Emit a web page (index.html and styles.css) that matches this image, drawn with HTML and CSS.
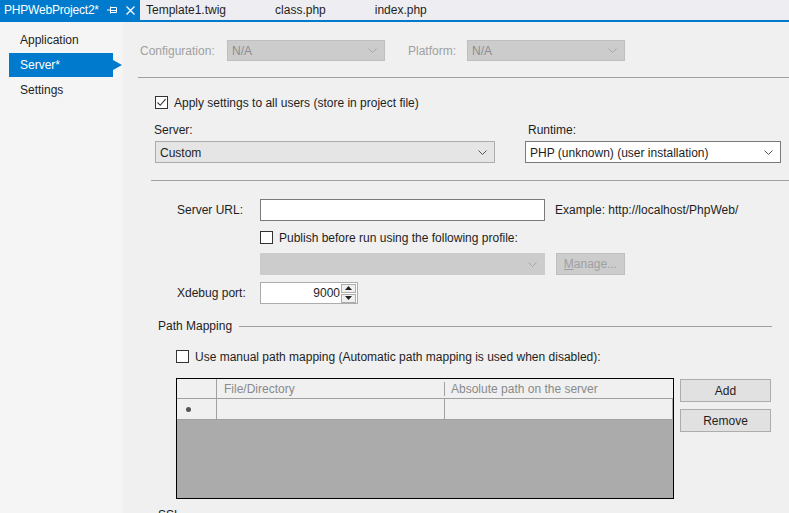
FILE: index.html
```html
<!DOCTYPE html>
<html lang="en">
<head>
    <meta charset="UTF-8">
    <title>PHPWebProject2 - Server</title>
    <link rel="stylesheet" href="styles.css">
</head>
<body>
    <div class="tabbar">
        <div class="tab active">
            <span class="tab-title">PHPWebProject2*</span>
            <svg class="pin" width="10" height="8" viewBox="0 0 10 8"><path d="M0 4H3.5M3.5 0.5V7.5M3.5 1.5H9.5V6.5H3.5M3.5 4.5H9.5" fill="none" stroke="#fff" stroke-width="1"/></svg>
            <svg class="close" width="9" height="9" viewBox="0 0 9 9"><path d="M0.5 0.5L8.5 8.5M8.5 0.5L0.5 8.5" stroke="#fff" stroke-width="1.3"/></svg>
        </div>
        <div class="tab">Template1.twig</div>
        <div class="tab">class.php</div>
        <div class="tab">index.php</div>
    </div>

    <div class="workspace">
        <nav class="sidenav">
            <div class="nav-item">Application</div>
            <div class="nav-item selected">Server*</div>
            <div class="nav-item">Settings</div>
        </nav>

        <main class="panel">
            <div class="config-row">
                <label class="lbl-config">Configuration:</label>
                <div class="combo disabled small"><span>N/A</span><svg width="9" height="5" viewBox="0 0 9 5"><path d="M0.5 0.5L4.5 4.5L8.5 0.5" fill="none" stroke="#a8a8a8"/></svg></div>
                <label class="lbl-platform">Platform:</label>
                <div class="combo disabled small"><span>N/A</span><svg width="9" height="5" viewBox="0 0 9 5"><path d="M0.5 0.5L4.5 4.5L8.5 0.5" fill="none" stroke="#a8a8a8"/></svg></div>
            </div>

            <div class="separator"></div>

            <div class="check-row apply-row">
                <span class="checkbox"><svg width="11" height="11" viewBox="0 0 11 11"><path d="M1.5 5.5L4.2 8.3L9.6 2.2" fill="none" stroke="#333" stroke-width="1.1"/></svg></span>
                <span>Apply settings to all users (store in project file)</span>
            </div>

            <div class="server-row">
                <div class="field-col server-col">
                    <label>Server:</label>
                    <div class="combo grey"><span>Custom</span><svg width="9" height="5" viewBox="0 0 9 5"><path d="M0.5 0.5L4.5 4.5L8.5 0.5" fill="none" stroke="#555"/></svg></div>
                </div>
                <div class="field-col runtime-col">
                    <label>Runtime:</label>
                    <div class="combo white"><span>PHP (unknown) (user installation)</span><svg width="9" height="5" viewBox="0 0 9 5"><path d="M0.5 0.5L4.5 4.5L8.5 0.5" fill="none" stroke="#555"/></svg></div>
                </div>
            </div>

            <div class="separator sep-two"></div>

            <div class="form">
                <div class="form-row url-row">
                    <label>Server URL:</label>
                    <div class="textbox"></div>
                    <span class="hint">Example: http://localhost/PhpWeb/</span>
                </div>
                <div class="form-row publish-row">
                    <label></label>
                    <span class="checkbox"></span>
                    <span class="check-text">Publish before run using the following profile:</span>
                </div>
                <div class="form-row profile-row">
                    <label></label>
                    <div class="combo disabled wide"><span></span><svg width="9" height="5" viewBox="0 0 9 5"><path d="M0.5 0.5L4.5 4.5L8.5 0.5" fill="none" stroke="#a8a8a8"/></svg></div>
                    <div class="button disabled"><u>M</u>anage...</div>
                </div>
                <div class="form-row port-row">
                    <label>Xdebug port:</label>
                    <div class="numeric">
                        <span class="num-value">9000</span>
                        <div class="spinner">
                            <span class="spin"><svg width="7" height="4" viewBox="0 0 7 4"><path d="M0 4L3.5 0L7 4Z" fill="#222"/></svg></span>
                            <span class="spin"><svg width="7" height="4" viewBox="0 0 7 4"><path d="M0 0L3.5 4L7 0Z" fill="#222"/></svg></span>
                        </div>
                    </div>
                </div>
            </div>

            <div class="group-title">
                <span>Path Mapping</span>
                <div class="group-line"></div>
            </div>

            <div class="check-row mapping-row">
                <span class="checkbox"></span>
                <span>Use manual path mapping (Automatic path mapping is used when disabled):</span>
            </div>

            <div class="mapping">
                <div class="grid">
                    <div class="grid-row grid-head">
                        <div class="cell row-head"></div>
                        <div class="cell col-one">File/Directory</div>
                        <div class="cell col-two">Absolute path on the server</div>
                    </div>
                    <div class="grid-row grid-new">
                        <div class="cell row-head"><span class="star"></span></div>
                        <div class="cell col-one"></div>
                        <div class="cell col-two"></div>
                    </div>
                </div>
                <div class="grid-buttons">
                    <div class="button">Add</div>
                    <div class="button">Remove</div>
                </div>
            </div>

            <div class="next-title">SSL</div>
        </main>
    </div>
</body>
</html>
```

FILE: styles.css
```css
body {
    margin: 0;
    width: 789px;
    height: 513px;
    overflow: hidden;
    font-family: "Liberation Sans", Arial, sans-serif;
    font-size: 12px;
    color: #1e1e1e;
    background-color: #f0f0f0;
}

/* barre d'onglets */
.tabbar {
    display: flex;
    height: 20px;
    line-height: 20px;
    background-color: #eeeef2;
    border-bottom: 2px solid #007acc;
}
.tab {
    padding: 0 43px 0 6px;
}
.tab.active {
    display: flex;
    align-items: center;
    width: 136px;
    padding: 0 0 0 4px;
    background-color: #007acc;
    color: #fff;
    letter-spacing: -0.2px;
}
.tab .pin {
    margin-left: 8px;
}
.tab .close {
    margin-left: 9px;
}

.workspace {
    display: flex;
    height: 491px;
}

/* navigation gauche */
.sidenav {
    width: 123px;
    padding-top: 6px;
    background-color: #f5f5f5;
}
.nav-item {
    height: 25px;
    line-height: 25px;
    padding-left: 20px;
}
.nav-item.selected {
    position: relative;
    width: 93px;
    height: 24px;
    line-height: 24px;
    margin: 0 0 1px 9px;
    padding-left: 11px;
    background-color: #007acc;
    color: #fff;
}
.nav-item.selected::after {
    content: "";
    position: absolute;
    right: -9px;
    top: 7px;
    border-left: 9px solid #007acc;
    border-top: 5px solid transparent;
    border-bottom: 5px solid transparent;
}

.panel {
    flex: 1;
}

/* controles communs */
.combo {
    box-sizing: border-box;
    display: flex;
    align-items: center;
    justify-content: space-between;
    height: 22px;
    padding: 0 7px 0 4px;
    border: 1px solid #acacac;
}
.combo.disabled {
    background-color: #cccccc;
    border-color: #bfbfbf;
    color: #8d8d8d;
}
.combo.small {
    width: 158px;
    height: 21px;
}
.combo.grey {
    width: 340px;
    margin-left: 1px;
    background-color: #e5e5e5;
}
.combo.white {
    width: 256px;
    background-color: #fff;
    border-color: #7a7a7a;
}
.combo.wide {
    width: 285px;
    border-color: #cccccc;
}
.checkbox {
    box-sizing: border-box;
    display: inline-flex;
    align-items: center;
    justify-content: center;
    width: 13px;
    height: 13px;
    border: 1px solid #333;
    background-color: #fff;
}
.button {
    box-sizing: border-box;
    display: flex;
    align-items: center;
    justify-content: center;
    width: 91px;
    height: 23px;
    background-color: #e1e1e1;
    border: 1px solid #adadad;
}
.button.disabled {
    width: 69px;
    height: 22px;
    margin-left: 11px;
    background-color: #cccccc;
    border-color: #bfbfbf;
    color: #a0a0a0;
}
.separator {
    margin: 16px 0 0 15px;
    border-top: 1px solid #a0a0a0;
}
.separator.sep-two {
    margin: 17px 0 0 28px;
}

/* configuration / plateforme */
.config-row {
    display: flex;
    align-items: center;
    height: 21px;
    margin: 18px 0 0 17px;
    color: #a0a0a0;
}
.lbl-config {
    width: 87px;
}
.lbl-platform {
    width: 59px;
    margin-left: 23px;
}

.check-row {
    display: flex;
    align-items: center;
    height: 13px;
}
.check-row .checkbox {
    margin-right: 6px;
}
.apply-row {
    margin: 18px 0 0 32px;
}

/* serveur / runtime */
.server-row {
    display: flex;
    margin: 13px 0 0 31px;
}
.field-col {
    display: flex;
    flex-direction: column;
}
.field-col label {
    height: 16px;
    line-height: 16px;
    margin-bottom: 3px;
}
.field-col .combo {
    padding-top: 1px;
}
.runtime-col {
    margin-left: 30px;
}
.runtime-col label {
    padding-left: 3px;
}

/* formulaire serveur */
.form {
    margin-left: 54px;
}
.form-row {
    display: flex;
    align-items: center;
}
.form-row label {
    width: 83px;
    flex-shrink: 0;
}
.url-row {
    margin-top: 18px;
}
.publish-row {
    margin-top: 10px;
    height: 13px;
}
.check-text {
    margin-left: 6px;
}
.profile-row {
    margin-top: 9px;
}
.port-row {
    margin-top: 7px;
}
.textbox {
    box-sizing: border-box;
    width: 285px;
    height: 22px;
    background-color: #fff;
    border: 1px solid #7a7a7a;
}
.hint {
    margin-left: 10px;
}
.numeric {
    box-sizing: border-box;
    display: flex;
    align-items: center;
    justify-content: flex-end;
    width: 98px;
    height: 22px;
    background-color: #fff;
    border: 1px solid #acacac;
}
.num-value {
    margin-right: 1px;
}
.spinner {
    display: flex;
    flex-direction: column;
    margin-right: 1px;
}
.spin {
    box-sizing: border-box;
    display: flex;
    align-items: center;
    justify-content: center;
    width: 15px;
    height: 9px;
    background-color: #f0f0f0;
    border: 1px solid #acacac;
}
.spin + .spin {
    margin-top: 1px;
}

/* mappage des chemins */
.group-title {
    display: flex;
    align-items: center;
    height: 16px;
    margin: 14px 17px 0 35px;
}
.group-line {
    flex: 1;
    margin-left: 7px;
    border-top: 1px solid #a0a0a0;
}
.mapping-row {
    margin: 16px 0 0 53px;
}
.mapping {
    display: flex;
    margin: 15px 0 0 53px;
}
.grid {
    box-sizing: border-box;
    width: 498px;
    height: 121px;
    background-color: #ababab;
    border: 1px solid #000;
}
.grid-row {
    display: flex;
    background-color: #f0f0f0;
    border-bottom: 1px solid #a0a0a0;
}
.grid-head {
    height: 19px;
    color: #8a8a8a;
}
.grid-new {
    height: 20px;
    width: 495px;
}
.cell {
    box-sizing: border-box;
}
.row-head {
    width: 40px;
    border-right: 1px solid #a0a0a0;
    display: flex;
    align-items: center;
    padding-left: 9px;
}
.col-one {
    width: 228px;
    padding-left: 7px;
}
.grid-head .col-one {
    border-right: 1px solid #a0a0a0;
    margin: 3px 0 2px;
    line-height: 15px;
}
.grid-head .col-two {
    line-height: 21px;
}
.grid-new .col-one {
    border-right: 1px solid #a0a0a0;
}
.col-two {
    flex: 1;
    padding-left: 6px;
}
.star {
    width: 5px;
    height: 5px;
    border-radius: 50%;
    background-color: #555;
}
.grid-buttons {
    margin-left: 6px;
}
.grid-buttons .button {
    margin-top: 1px;
}
.grid-buttons .button + .button {
    margin-top: 7px;
}
.next-title {
    margin: 8px 0 0 35px;
    line-height: 16px;
}
```
